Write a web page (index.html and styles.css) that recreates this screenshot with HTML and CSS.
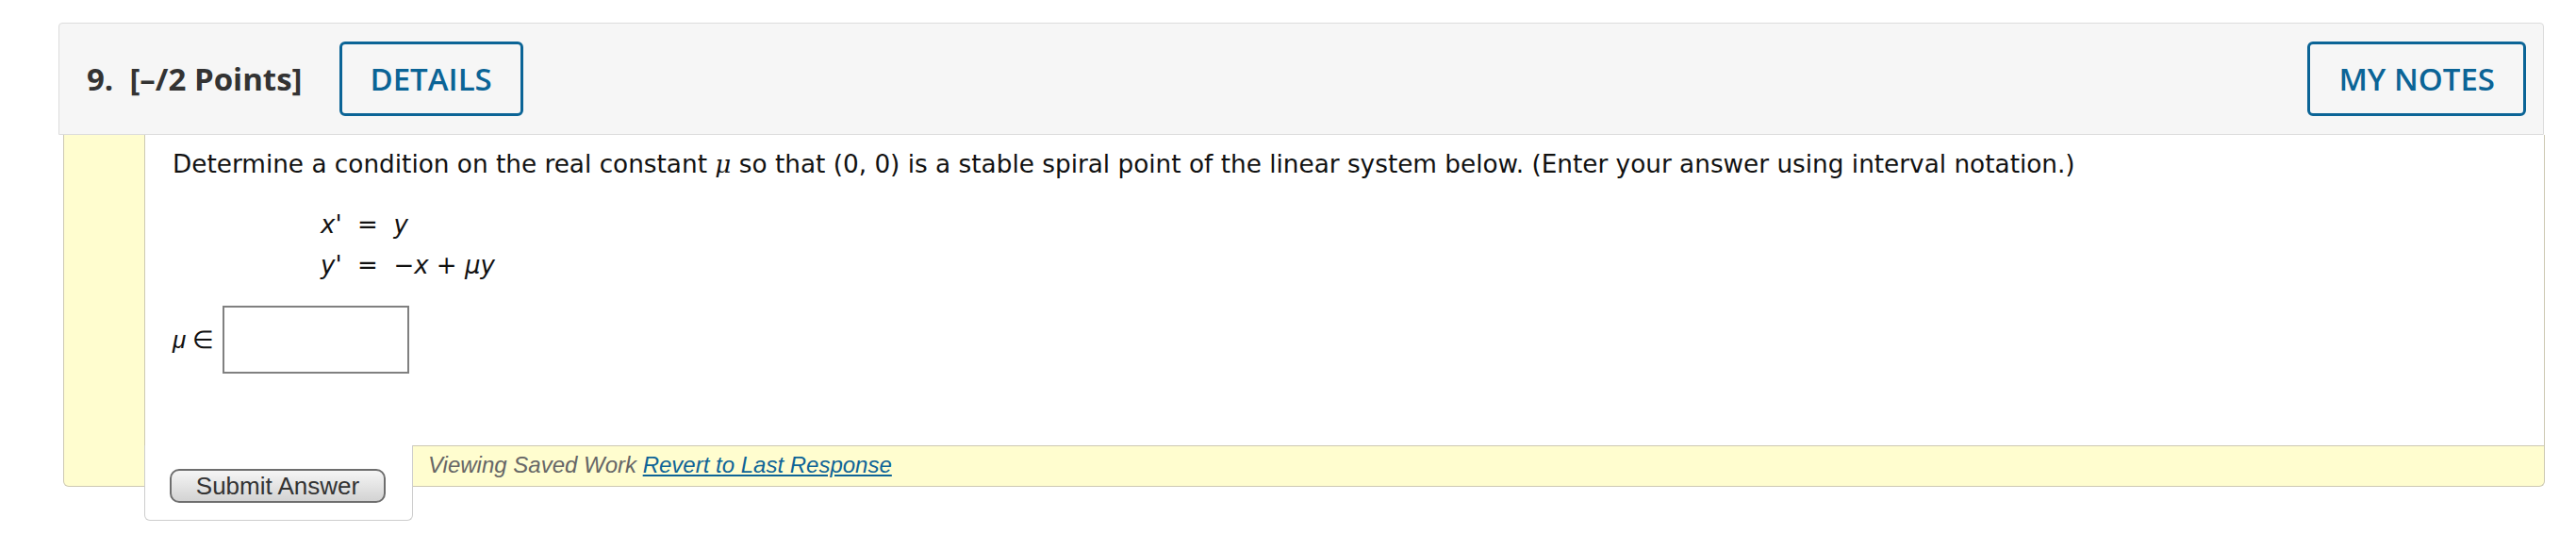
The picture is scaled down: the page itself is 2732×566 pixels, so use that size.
FILE: index.html
```html
<!DOCTYPE html>
<html>
<head>
<meta charset="utf-8">
<link rel="stylesheet" href="styles.css">
</head>
<body>
<div class="question">
  <div class="qheader">
    <div class="qtitle">9.&nbsp; [–/2 Points]</div>
    <button class="hbtn details">DETAILS</button>
    <div class="spacer"></div>
    <button class="hbtn">MY NOTES</button>
  </div>
  <div class="qbody">
    <div class="gutter"></div>
    <div class="main">
      <div class="content">
        <p class="prompt">Determine a condition on the real constant <i class="mu">μ</i> so that (0, 0) is a stable spiral point of the linear system below. (Enter your answer using interval notation.)</p>
        <div class="eqs">
          <div class="eq"><i>x'</i> &nbsp;=&nbsp; <i>y</i></div>
          <div class="eq"><i>y'</i> &nbsp;=&nbsp; −<i>x</i> + <i>μy</i></div>
        </div>
        <div class="answer">
          <span class="alabel"><i>μ</i> ∈</span>
          <input class="ainput" type="text">
        </div>
      </div>
      <div class="footer">
        <div class="submit-tab"><button class="submit">Submit Answer</button></div>
        <div class="saved">Viewing Saved Work <a href="#" class="revert">Revert to Last Response</a></div>
      </div>
    </div>
  </div>
</div>
</body>
</html>
```
FILE: styles.css
```css
html, body {
  margin: 0;
  padding: 0;
  background: #ffffff;
}
body {
  padding-bottom: 50px;
}
.question {
  margin: 24px 0 0 62px;
  width: 2637px;
}
.qheader {
  box-sizing: border-box;
  width: 2636px;
  height: 119px;
  display: flex;
  align-items: center;
  padding: 0 18px 0 29px;
  background: #f6f6f6;
  border: 1px solid #dcdcdc;
  border-radius: 4px 4px 0 0;
}
.qtitle {
  font-family: "Open Sans", sans-serif;
  font-weight: 700;
  font-size: 33px;
  color: #333333;
  white-space: pre;
}
.spacer { flex: 1; }
.hbtn {
  box-sizing: border-box;
  height: 79px;
  padding: 0 30px;
  background: transparent;
  border: 3px solid #0b6496;
  border-radius: 6px;
  color: #0b6496;
  font-family: "Open Sans", sans-serif;
  font-weight: 600;
  font-size: 33px;
}
.details { margin-left: 39px; }
.qbody {
  box-sizing: border-box;
  margin-left: 5px;
  height: 373px;
  display: flex;
  background: #fffdcf;
  border: 1px solid #cdc9b3;
  border-top: none;
  border-radius: 0 0 6px 6px;
}
.gutter {
  width: 85px;
  flex: none;
}
.main {
  flex: 1;
  display: flex;
  flex-direction: column;
}
.content {
  box-sizing: border-box;
  height: 329px;
  flex: none;
  background: #ffffff;
  border-left: 1px solid #cdc9b3;
  padding: 16px 30px 0 29px;
  font-family: "DejaVu Sans", Verdana, sans-serif;
  font-size: 26px;
  color: #111111;
}
.prompt {
  margin: 0;
  font-size: 26.3px;
  line-height: 30px;
}
.mu { font-family: "DejaVu Serif", serif; }
.eqs {
  margin: 28px 0 0 157px;
}
.eq {
  line-height: 43px;
}
.answer {
  display: flex;
  align-items: center;
  margin-top: 21px;
}
.alabel {
  font-family: "Liberation Sans", Arial, sans-serif;
  font-size: 26px;
  margin-right: 9px;
}
.ainput {
  box-sizing: border-box;
  width: 198px;
  height: 72px;
  border: 2px solid #808080;
  margin: 0;
}
.footer {
  display: flex;
  height: 43px;
  flex: none;
  align-items: flex-start;
}
.submit-tab {
  box-sizing: border-box;
  width: 285px;
  height: 80px;
  flex: none;
  background: #ffffff;
  border: 1px solid #cdcdcd;
  border-top: none;
  border-radius: 0 0 6px 6px;
  padding: 25px 0 0 26px;
  position: relative;
  z-index: 1;
}
.submit {
  box-sizing: border-box;
  width: 229px;
  height: 36px;
  padding: 0;
  border: 2px solid #6e6e6e;
  border-radius: 10px;
  background: linear-gradient(#f5f5f5, #d3d3d3);
  font-family: "Liberation Sans", Arial, sans-serif;
  font-size: 26px;
  line-height: 30px;
  color: #333333;
}
.saved {
  flex: 1;
  box-sizing: border-box;
  height: 43px;
  border-top: 1px solid #cdc9b3;
  padding: 0 0 0 16px;
  font-family: "Liberation Sans", Arial, sans-serif;
  font-style: italic;
  font-size: 24px;
  line-height: 40px;
  color: #666666;
}
.revert {
  color: #0e6497;
  text-decoration: underline;
}
```
